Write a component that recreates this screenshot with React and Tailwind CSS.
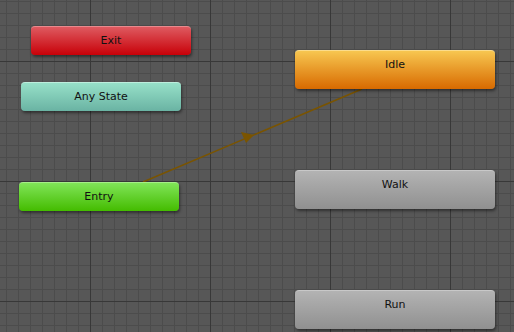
import React from "react";

function Grid() {
  return (
    <svg className="absolute inset-0" width="514" height="332">
      <defs>
        <pattern id="minor" x="6" y="1" width="12" height="12" patternUnits="userSpaceOnUse">
          <path d="M0 0.5H12M0.5 0V12" stroke="#4c4c4c" strokeWidth="1" fill="none" />
        </pattern>
        <pattern id="major" x="90" y="61" width="120" height="120" patternUnits="userSpaceOnUse">
          <path d="M0 0.5H120M0.5 0V120" stroke="#383838" strokeWidth="1" fill="none" />
        </pattern>
      </defs>
      <rect width="514" height="332" fill="#575757" />
      <rect width="514" height="332" fill="url(#minor)" />
      <rect width="514" height="332" fill="url(#major)" />
    </svg>
  );
}

function Node({ className, label }) {
  return (
    <div
      className={
        "absolute flex items-center justify-center rounded-[4px] text-[11px] text-[#111] shadow-[1px_2px_3px_rgba(0,0,0,0.45)] " +
        className
      }
      style={{ fontFamily: '"DejaVu Sans", sans-serif' }}
    >
      {label}
    </div>
  );
}

export default function App() {
  return (
    <div className="relative w-[514px] h-[332px] overflow-hidden bg-[#575757]">
      <Grid />
      <svg className="absolute inset-0" width="514" height="332">
        <line x1="143" y1="182" x2="362" y2="89" stroke="#7a5400" strokeWidth="1.5" />
        <polygon points="254,135 241,132 246,143" fill="#7a5400" />
      </svg>
      <Node
        label="Exit"
        className="left-[31px] top-[26px] w-[160px] h-[29px] bg-[linear-gradient(to_bottom,#de5a60,#c80008)] border-t border-[#e88a8e]"
      />
      <Node
        label="Any State"
        className="left-[21px] top-[82px] w-[160px] h-[29px] bg-[linear-gradient(to_bottom,#96e0c8,#6ab3a3)] border-t border-[#bdeedd]"
      />
      <Node
        label="Entry"
        className="left-[19px] top-[182px] w-[160px] h-[29px] bg-[linear-gradient(to_bottom,#80e458,#44bc00)] border-t border-[#a6ee88]"
      />
      <Node
        label="Idle"
        className="left-[295px] top-[50px] w-[200px] h-[39px] pb-[10px] bg-[linear-gradient(to_bottom,#f7c650,#d86a00)] border-t border-[#fbdc8c]"
      />
      <Node
        label="Walk"
        className="left-[295px] top-[170px] w-[200px] h-[39px] pb-[10px] bg-[linear-gradient(to_bottom,#b3b3b3,#909090)] border-t border-[#c8c8c8]"
      />
      <Node
        label="Run"
        className="left-[295px] top-[290px] w-[200px] h-[39px] pb-[10px] bg-[linear-gradient(to_bottom,#b3b3b3,#909090)] border-t border-[#c8c8c8]"
      />
    </div>
  );
}
